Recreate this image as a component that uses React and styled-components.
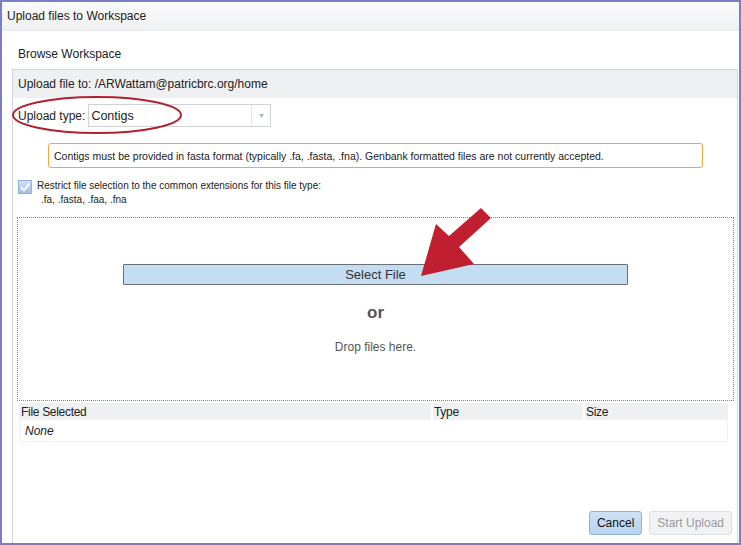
import React from 'react';
import styled, { createGlobalStyle } from 'styled-components';

const GlobalStyle = createGlobalStyle`
  html, body {
    margin: 0;
    padding: 0;
    background: #fff;
  }
  body {
    font-family: "Liberation Sans", Arial, sans-serif;
    color: #222;
  }
`;

const Dialog = styled.div`
  position: relative;
  width: 741px;
  height: 545px;
  box-sizing: border-box;
  border: 2px solid #7a7fc3;
  display: flex;
  flex-direction: column;
  overflow: hidden;
`;

const TitleBar = styled.div`
  height: 28px;
  flex: none;
  display: flex;
  align-items: center;
  padding-left: 5px;
  font-size: 12px;
  color: #222;
  background: linear-gradient(#f9fafb, #eef0f2);
  border-bottom: 1px solid #e8eaed;
`;

const Body = styled.div`
  flex: 1;
  display: flex;
  flex-direction: column;
  padding: 0 1px 0 10px;
`;

const Crumb = styled.div`
  height: 38px;
  display: flex;
  align-items: center;
  padding: 7px 0 0 6px;
  box-sizing: border-box;
  font-size: 12px;
`;

const Panel = styled.div`
  flex: 1;
  display: flex;
  flex-direction: column;
  border: 1px solid #d3d5d8;
  border-bottom: none;
`;

const PanelHeader = styled.div`
  height: 28px;
  display: flex;
  align-items: center;
  padding-left: 5px;
  background: #eff0f1;
  font-size: 12px;
`;

const TypeRow = styled.div`
  display: flex;
  align-items: center;
  gap: 3px;
  margin: 6px 0 0 5px;
  font-size: 12px;
`;

const Select = styled.div`
  width: 181px;
  height: 21px;
  border: 1px solid #cfd2d6;
  display: flex;
  align-items: center;
  font-size: 12.5px;
  & > span {
    flex: 1;
    padding-left: 2px;
  }
`;

const SelectArrow = styled.div`
  width: 18px;
  height: 100%;
  border-left: 1px solid #e1e3e6;
  display: flex;
  align-items: center;
  justify-content: center;
  color: #a3b0c6;
  font-size: 7px;
`;

const Notice = styled.div`
  margin: 16px 34px 0 35px;
  height: 23px;
  border: 1px solid #f5a73e;
  border-radius: 3px;
  display: flex;
  align-items: center;
  padding-left: 5px;
  font-size: 10.5px;
  color: #222;
`;

const CheckRow = styled.div`
  display: flex;
  align-items: flex-start;
  gap: 5px;
  margin: 11px 0 0 5px;
  font-size: 10px;
  line-height: 14px;
  color: #222;
`;

const Check = styled.span`
  width: 12px;
  height: 12px;
  flex: none;
  margin-top: 1px;
  border: 1px solid #8fb0d8;
  background: linear-gradient(#cfe2f7, #9fc0e8);
  display: flex;
  align-items: center;
  justify-content: center;
`;

const Exts = styled.div`
  padding-left: 4px;
`;

const DropZone = styled.div`
  margin: 10px 3px 0 4px;
  height: 184px;
  border: 1px dotted #4a8fe0;
  display: flex;
  flex-direction: column;
  align-items: center;
  padding-top: 46px;
  box-sizing: border-box;
`;

const SelectButton = styled.div`
  width: 503px;
  height: 19px;
  border: 1px solid #6c6f73;
  border-radius: 1px;
  background: #c4ddf3;
  display: flex;
  align-items: center;
  justify-content: center;
  font-size: 13px;
  color: #333;
`;

const Or = styled.div`
  margin-top: 18px;
  font-size: 17px;
  font-weight: bold;
  color: #555;
`;

const DropText = styled.div`
  margin-top: 17px;
  font-size: 12px;
  color: #555;
`;

const Table = styled.div`
  margin: 2px 9px 0 6px;
  border: 1px solid #f0f1f2;
  border-top: none;
  font-size: 12px;
`;

const HeadRow = styled.div`
  display: grid;
  grid-template-columns: 411px 150px 1fr;
  column-gap: 2px;
  height: 17px;
`;

const HeadCell = styled.div`
  background: #eff0f1;
  display: flex;
  align-items: center;
  padding-left: 1px;
  color: #222;
  letter-spacing: -0.3px;
`;

const EmptyRow = styled.div`
  height: 21px;
  display: flex;
  align-items: center;
  padding-left: 5px;
  font-style: italic;
  color: #222;
`;

const Footer = styled.div`
  margin-top: auto;
  display: flex;
  justify-content: flex-end;
  gap: 7px;
  padding: 0 5px 8px 0;
`;

const Button = styled.div`
  height: 22px;
  padding: 0 7px;
  border-radius: 3px;
  border: 1px solid ${p => (p.disabled ? '#dcdee1' : '#8fb1d6')};
  background: ${p => (p.disabled ? '#f1f2f3' : 'linear-gradient(#cde2f6, #b8d4f0)')};
  color: ${p => (p.disabled ? '#9a9a9a' : '#111')};
  display: flex;
  align-items: center;
  font-size: 12px;
`;

const Overlay = styled.svg`
  position: absolute;
  left: -2px;
  top: -2px;
  pointer-events: none;
`;

export default function App() {
  return (
    <>
      <GlobalStyle />
      <Dialog>
        <TitleBar>Upload files to Workspace</TitleBar>
        <Body>
          <Crumb>Browse Workspace</Crumb>
          <Panel>
            <PanelHeader>Upload file to: /ARWattam@patricbrc.org/home</PanelHeader>
            <TypeRow>
              Upload type:
              <Select>
                <span>Contigs</span>
                <SelectArrow>▼</SelectArrow>
              </Select>
            </TypeRow>
            <Notice>
              Contigs must be provided in fasta format (typically .fa, .fasta, .fna). Genbank formatted files are not currently accepted.
            </Notice>
            <CheckRow>
              <Check>
                <svg width="10" height="9" viewBox="0 0 10 9">
                  <path d="M1 4.5 L4 7.5 L9 1" fill="none" stroke="#ffffff" strokeWidth="1.8" />
                </svg>
              </Check>
              <div>
                Restrict file selection to the common extensions for this file type:
                <Exts>.fa, .fasta, .faa, .fna</Exts>
              </div>
            </CheckRow>
            <DropZone>
              <SelectButton>Select File</SelectButton>
              <Or>or</Or>
              <DropText>Drop files here.</DropText>
            </DropZone>
            <Table>
              <HeadRow>
                <HeadCell>File Selected</HeadCell>
                <HeadCell>Type</HeadCell>
                <HeadCell>Size</HeadCell>
              </HeadRow>
              <EmptyRow>None</EmptyRow>
            </Table>
            <Footer>
              <Button>Cancel</Button>
              <Button disabled>Start Upload</Button>
            </Footer>
          </Panel>
        </Body>
        <Overlay width="741" height="545" viewBox="0 0 741 545">
          <ellipse cx="97" cy="115" rx="84" ry="18" fill="none" stroke="#b3202d" strokeWidth="2" />
          <polygon
            points="421,276 436,224 449,236 481,208 491,218 459,247 474,264"
            fill="#c01f2f"
          />
        </Overlay>
      </Dialog>
    </>
  );
}
